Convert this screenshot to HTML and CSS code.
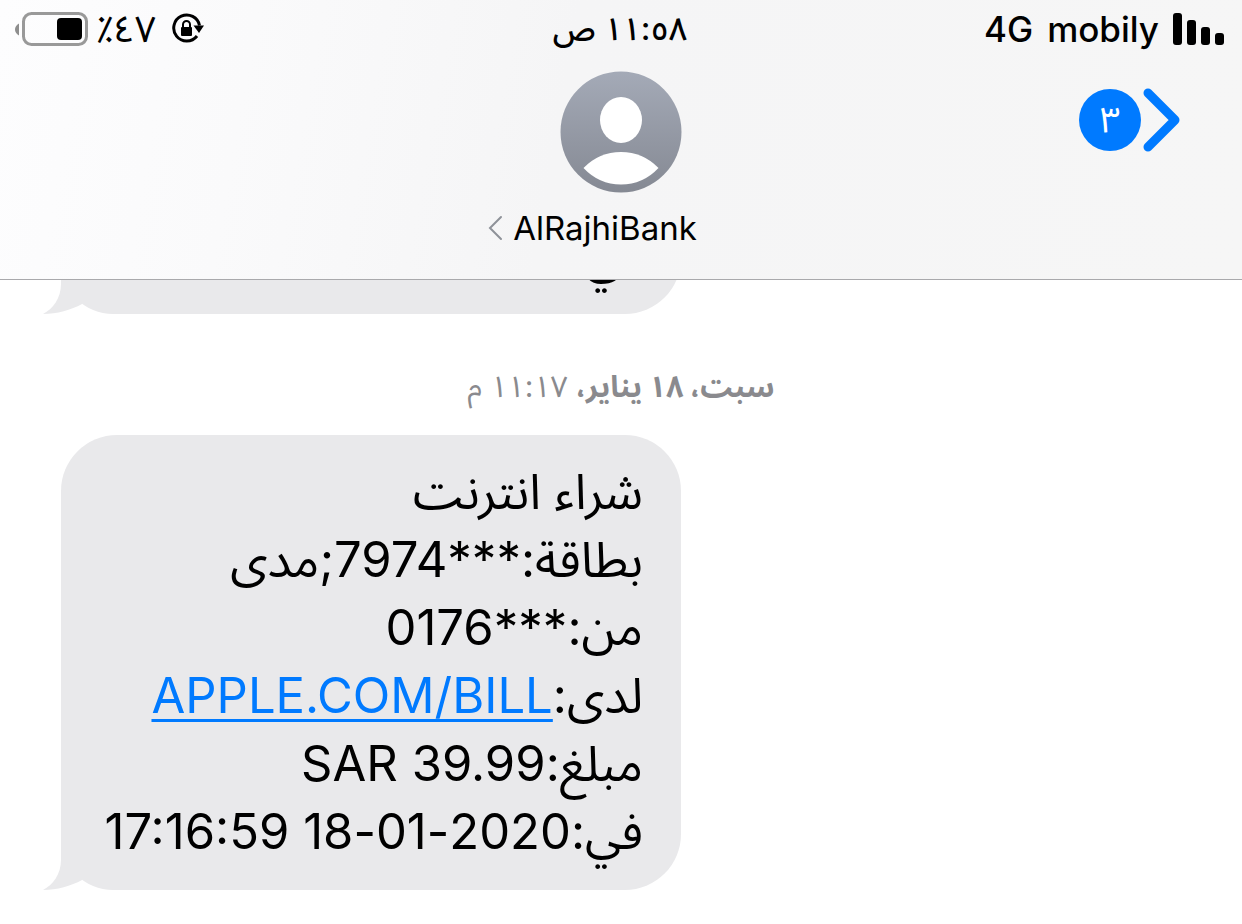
FILE: index.html
```
<!DOCTYPE html>
<html lang="ar" dir="rtl">
<head>
  <meta charset="utf-8">
  <meta name="viewport" content="width=device-width, initial-scale=1">
  <title>AlRajhiBank</title>
  <link rel="stylesheet" href="styles.css">
</head>
<body>
  <header class="top">
    <div class="status">
      <div class="status-side">
        <svg class="signal" width="52" height="33" viewBox="0 0 52 33">
          <rect x="0" y="0" width="9" height="32" rx="3"/>
          <rect x="14" y="7" width="9" height="25" rx="3"/>
          <rect x="28" y="14" width="9" height="18" rx="3"/>
          <rect x="42" y="20" width="9" height="12" rx="3"/>
        </svg>
        <span class="carrier" dir="ltr"><span>4G</span><span>mobily</span></span>
      </div>
      <span class="clock">١١:٥٨ ص</span>
      <div class="status-side status-end">
        <svg class="lock" width="34" height="32" viewBox="0 0 34 32">
          <path class="ring" d="M26 23A13 13 0 1 1 28.500 12.500"/>
          <path d="M22.500 12.500H33L28 20Z"/>
          <rect x="10" y="14" width="11" height="9" rx="1"/>
          <path class="shackle" d="M12 15V11.500a3.500 3.500 0 0 1 7 0V15"/>
        </svg>
        <span class="percent">٤٧٪</span>
        <svg class="battery" width="74" height="36" viewBox="0 0 74 36">
          <path class="cap" d="M4 12.500V24.500Q0 22 0 18.500T4 12.500Z"/>
          <rect class="case" x="8.500" y="2.500" width="63" height="31" rx="8"/>
          <rect x="42" y="7" width="25" height="22" rx="4"/>
        </svg>
      </div>
    </div>

    <div class="nav">
      <button class="back" type="button" aria-label="رجوع">
        <svg width="38" height="64" viewBox="0 0 38 64"><path d="M5 5L32 32L5 59"/></svg>
        <span class="badge">٣</span>
      </button>
      <button class="contact" type="button">
        <svg class="avatar" width="122" height="122" viewBox="0 0 122 122">
          <defs>
            <linearGradient id="avatarFill" x1="0" y1="0" x2="0" y2="1">
              <stop offset="0" stop-color="#a4aab7"/>
              <stop offset="1" stop-color="#858993"/>
            </linearGradient>
          </defs>
          <circle cx="61" cy="61" r="60.500" fill="url(#avatarFill)"/>
          <ellipse cx="61" cy="49" rx="21" ry="23" fill="#fff"/>
          <path d="M23.500 97Q39 81 61 81T98.500 97Q83 113.500 61 113.500T23.500 97Z" fill="#fff"/>
        </svg>
        <span class="name" dir="ltr">
          <svg width="16" height="26" viewBox="0 0 16 26"><path d="M14 2L3 13L14 24"/></svg>
          AlRajhiBank
        </span>
      </button>
    </div>
  </header>

  <main class="messages">
    <div class="bubble">
      <p>في</p>
      <svg class="tail" width="40" height="60" viewBox="0 0 40 60"><path d="M18 0V30C18 44 10 55 0 60C14 60 28 56 39 50V0Z"/></svg>
    </div>
    <time class="date"><b>سبت، ١٨ يناير،</b> ١١:١٧ م</time>
    <div class="bubble">
      <p>شراء انترنت</p>
      <p>بطاقة:***7974;مدى</p>
      <p>من:***0176</p>
      <p>لدى:<a href="#">APPLE.COM/BILL</a></p>
      <p>مبلغ:SAR 39.99</p>
      <p>في:2020-01-18 17:16:59</p>
      <svg class="tail" width="40" height="60" viewBox="0 0 40 60"><path d="M18 0V30C18 44 10 55 0 60C14 60 28 56 39 50V0Z"/></svg>
    </div>
  </main>
</body>
</html>
```

FILE: styles.css
```
* {
  box-sizing: border-box;
}
body {
  margin: 0;
  height: 100vh;
  display: flex;
  flex-direction: column;
  background: #fff;
  color: #000;
  font-family: Inter, "Noto Sans Arabic", "DejaVu Sans", sans-serif;
}
button {
  padding: 0;
  border: 0;
  background: none;
  color: inherit;
  font: inherit;
  cursor: pointer;
}
p {
  margin: 0;
}

/* header */
.top {
  flex: none;
  padding-bottom: 31px;
  border-bottom: 1px solid #a9a9ac;
  background: linear-gradient(100deg, #fdfdfe 0%, #fafafb 20%, #f5f5f6 45%, #f6f6f6 100%);
}
.status {
  display: grid;
  grid-template-columns: 1fr auto 1fr;
  align-items: center;
  height: 60px;
  padding: 0 17px 2px 15px;
  font-size: 35px;
  line-height: 40px;
}
.status-side {
  display: flex;
  align-items: center;
  gap: 14px;
}
.status-end {
  justify-content: flex-end;
  gap: 7px;
}
.carrier {
  display: flex;
  gap: 14px;
  font-weight: 500;
}
.clock {
  font-size: 32px;
  font-weight: 500;
}
.percent {
  font-size: 37px;
}
.lock {
  margin-left: 8px;
}
.lock .ring,
.lock .shackle {
  fill: none;
  stroke: #000;
  stroke-width: 3;
}
.lock .shackle {
  stroke-width: 2;
}
.battery .case {
  fill: none;
  stroke: #999;
  stroke-width: 3;
}
.battery .cap {
  fill: #8e8e8e;
}
.nav {
  display: grid;
  grid-template-columns: 1fr auto 1fr;
  align-items: start;
  padding: 11px 61px 0;
}
.back {
  display: flex;
  align-items: center;
  gap: 2px;
  justify-self: start;
  margin-top: 17px;
}
.back path {
  fill: none;
  stroke: #007aff;
  stroke-width: 9;
  stroke-linecap: round;
  stroke-linejoin: round;
}
.badge {
  width: 62px;
  height: 62px;
  border-radius: 50%;
  background: #007aff;
  color: #fff;
  font-size: 36px;
  line-height: 60px;
}
.contact {
  display: flex;
  flex-direction: column;
  align-items: center;
  gap: 15px;
}
.name {
  display: flex;
  align-items: center;
  gap: 10px;
  margin-right: 58px;
  font-size: 33px;
  line-height: 40px;
}
.name path {
  fill: none;
  stroke: #8e9299;
  stroke-width: 2;
  stroke-linecap: round;
}

/* conversation, newest message stays at the bottom */
.messages {
  flex: 1;
  min-height: 0;
  display: flex;
  flex-direction: column;
  justify-content: flex-end;
  overflow: hidden;
  padding: 0 61px 34px;
}
.bubble {
  position: relative;
  align-self: flex-end;
  flex: none;
  min-width: 620px;
  padding: 23px 38px 24px 36px;
  border-radius: 56px 56px 56px 52px;
  background: #e9e9eb;
  font-size: 49px;
  line-height: 68px;
}
.bubble a {
  color: #007aff;
  text-decoration-thickness: 3px;
  text-underline-offset: 6px;
}
.tail {
  position: absolute;
  left: -18px;
  bottom: 0;
  fill: #e9e9eb;
}
.date {
  flex: none;
  padding: 60px 0 37px;
  color: #8a8a8e;
  font-size: 30px;
  line-height: 24px;
  text-align: center;
}
```
